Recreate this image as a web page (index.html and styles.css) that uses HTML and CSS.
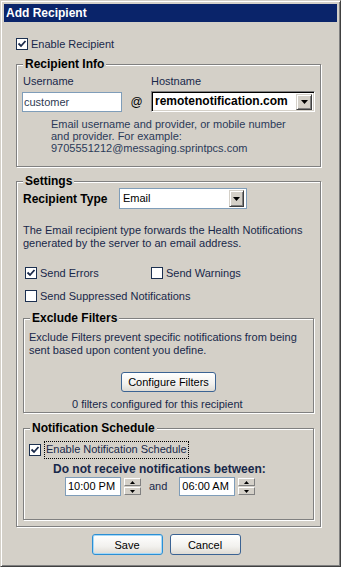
FILE: index.html
```html
<!DOCTYPE html>
<html lang="en">
<head>
  <meta charset="UTF-8">
  <title>Add Recipient</title>
  <link rel="stylesheet" href="styles.css">
</head>
<body>
  <div class="window">
    <!-- title bar -->
    <div class="titlebar">Add Recipient</div>

    <div class="content">
      <label class="check">
        <span class="box"><svg width="10" height="10" viewBox="0 0 10 10"><path d="M1.5 4.5 L4 7 L8.5 2" fill="none" stroke="#1b2a4a" stroke-width="1.8"/></svg></span>
        Enable Recipient
      </label>

      <!-- recipient info -->
      <fieldset class="group info">
        <legend>Recipient Info</legend>
        <div class="host-grid">
          <span class="field-label">Username</span>
          <span></span>
          <span class="field-label host-label">Hostname</span>
          <input class="text-input" type="text" value="customer">
          <span class="at">@</span>
          <div class="combo combo-inset">
            <span class="combo-value">remotenotification.com</span>
            <span class="drop-btn"><svg width="7" height="4" viewBox="0 0 7 4"><path d="M0 0 H7 L3.5 4 Z" fill="#000"/></svg></span>
          </div>
        </div>
        <p class="hint">Email username and provider, or mobile number<br>and provider. For example:<br>9705551212@messaging.sprintpcs.com</p>
      </fieldset>

      <!-- settings -->
      <fieldset class="group settings">
        <legend>Settings</legend>
        <div class="type-row">
          <span class="type-label">Recipient Type</span>
          <div class="combo combo-flat">
            <span class="combo-value">Email</span>
            <span class="drop-btn"><svg width="7" height="4" viewBox="0 0 7 4"><path d="M0 0 H7 L3.5 4 Z" fill="#000"/></svg></span>
          </div>
        </div>
        <p class="desc">The Email recipient type forwards the Health Notifications<br>generated by the server to an email address.</p>

        <div class="send-grid">
          <label class="check">
            <span class="box"><svg width="10" height="10" viewBox="0 0 10 10"><path d="M1.5 4.5 L4 7 L8.5 2" fill="none" stroke="#1b2a4a" stroke-width="1.8"/></svg></span>
            Send Errors
          </label>
          <label class="check"><span class="box"></span>Send Warnings</label>
          <label class="check span-2"><span class="box"></span>Send Suppressed Notifications</label>
        </div>

        <fieldset class="group sub filters">
          <legend>Exclude Filters</legend>
          <p class="sub-text">Exclude Filters prevent specific notifications from being<br>sent based upon content you define.</p>
          <div class="btn-row"><button class="xp-btn configure">Configure Filters</button></div>
          <p class="count">0 filters configured for this recipient</p>
        </fieldset>

        <fieldset class="group sub schedule">
          <legend>Notification Schedule</legend>
          <label class="check">
            <span class="box"><svg width="10" height="10" viewBox="0 0 10 10"><path d="M1.5 4.5 L4 7 L8.5 2" fill="none" stroke="#1b2a4a" stroke-width="1.8"/></svg></span>
            <span class="focus">Enable Notification Schedule</span>
          </label>
          <div class="between">Do not receive notifications between:</div>
          <div class="time-row">
            <div class="time">
              <span class="time-box">10:00 PM</span>
              <span class="spin">
                <span class="spin-btn"><svg width="5" height="3" viewBox="0 0 5 3"><path d="M0 3 H5 L2.5 0 Z" fill="#000"/></svg></span>
                <span class="spin-btn"><svg width="5" height="3" viewBox="0 0 5 3"><path d="M0 0 H5 L2.5 3 Z" fill="#000"/></svg></span>
              </span>
            </div>
            <span class="and">and</span>
            <div class="time">
              <span class="time-box">06:00 AM</span>
              <span class="spin">
                <span class="spin-btn"><svg width="5" height="3" viewBox="0 0 5 3"><path d="M0 3 H5 L2.5 0 Z" fill="#000"/></svg></span>
                <span class="spin-btn"><svg width="5" height="3" viewBox="0 0 5 3"><path d="M0 0 H5 L2.5 3 Z" fill="#000"/></svg></span>
              </span>
            </div>
          </div>
        </fieldset>
      </fieldset>

      <div class="actions">
        <button class="xp-btn default">Save</button>
        <button class="xp-btn">Cancel</button>
      </div>
    </div>
  </div>
</body>
</html>
```

FILE: styles.css
```css
:root {
  --face: #d4d0c8;
  --shadow: #808080;
  --dark: #404040;
  --hilite: #ffffff;
  --title: #0a246a;
  --ink: #18284a;
  --hint: #2b3a58;
  --field-border: #7f9db9;
}
html, body {
  margin: 0;
  padding: 0;
}
body {
  background: var(--face);
  font-family: "Liberation Sans", Arial, sans-serif;
  font-size: 11px;
  line-height: 13px;
  color: var(--ink);
}
p { margin: 0; }

/* ---------- window frame ---------- */
.window {
  width: 341px;
  height: 567px;
  box-sizing: border-box;
  padding: 3px 3px 0 3px;
  border: 1px solid;
  border-color: var(--face) var(--dark) var(--dark) var(--face);
  box-shadow: inset 1px 1px 0 var(--hilite), inset -1px -1px 0 var(--shadow);
  background: var(--face);
}
.titlebar {
  height: 18px;
  line-height: 18px;
  padding-left: 2px;
  background: var(--title);
  color: #fff;
  font-weight: bold;
  font-size: 12px;
}
.content {
  padding: 14px 0 0 12px;
}

/* ---------- checkboxes ---------- */
.check {
  display: flex;
  align-items: center;
  gap: 3px;
  height: 16px;
}
.box {
  width: 12px;
  height: 12px;
  box-sizing: border-box;
  border: 1px solid #1c3050;
  background: #fff;
  display: flex;
  align-items: center;
  justify-content: center;
  flex: none;
}
.focus {
  outline: 1px dotted #000;
  padding: 1px 1px 2px;
  margin-left: 1px;
}

/* ---------- group boxes ---------- */
.group {
  margin: 0;
  padding: 0 6px;
  min-width: 0;
  width: 305px;
  box-sizing: border-box;
  border: 1px solid var(--shadow);
  box-shadow: 1px 1px 0 var(--hilite), inset 1px 1px 0 var(--hilite);
}
.group legend {
  padding: 0 2px;
  font-size: 12px;
  line-height: 14px;
  font-weight: bold;
  color: #000;
  background: var(--face);
}
.info {
  margin-top: 5px;
  padding-bottom: 12px;
}
.settings {
  margin-top: 7px;
  padding-bottom: 6px;
}
.sub {
  width: 291px;
  padding: 0 5px;
}
.sub legend { margin-left: 1px; }

/* ---------- recipient info ---------- */
.host-grid {
  display: grid;
  grid-template-columns: 100px 29px 164px;
  row-gap: 4px;
  align-items: center;
  margin-left: -1px;
  padding-top: 4px;
}
.field-label { padding-left: 1px; }
.host-label { margin-left: -1px; }
.text-input {
  width: 100px;
  height: 20px;
  box-sizing: border-box;
  margin: 0;
  padding: 0 0 0 1px;
  border: 1px solid var(--field-border);
  background: #fff;
  font: 11px "Liberation Sans", Arial, sans-serif;
  color: #2e3a52;
  outline: none;
}
.at {
  text-align: center;
  font-size: 12px;
  color: #000;
}
.combo {
  display: flex;
  align-items: center;
  justify-content: space-between;
  box-sizing: border-box;
  background: #fff;
}
.combo-inset {
  width: 164px;
  height: 21px;
  margin-top: -1px;
  padding: 0 2px 0 3px;
  border: 1px solid;
  border-color: var(--shadow) var(--hilite) var(--hilite) var(--shadow);
  box-shadow: inset 1px 1px 0 #000, inset -1px -1px 0 var(--face);
}
.combo-inset .combo-value {
  font-size: 12px;
  font-weight: bold;
  color: #000;
}
.drop-btn {
  width: 16px;
  height: 16px;
  box-sizing: border-box;
  display: flex;
  align-items: center;
  justify-content: center;
  background: var(--face);
  border: 1px solid;
  border-color: var(--face) var(--dark) var(--dark) var(--face);
  box-shadow: inset 1px 1px 0 var(--hilite), inset -1px -1px 0 var(--shadow);
}
.hint {
  margin: 6px 0 0 28px;
  line-height: 12px;
  color: var(--hint);
}

/* ---------- settings ---------- */
.type-row {
  display: flex;
  align-items: center;
}
.type-label {
  width: 96px;
  font-size: 12px;
  line-height: 14px;
  font-weight: bold;
  color: #000;
}
.combo-flat {
  width: 128px;
  height: 21px;
  padding: 0 2px 0 3px;
  border: 1px solid var(--field-border);
  color: #000;
}
.combo-flat .drop-btn { height: 17px; width: 15px; }
.desc {
  margin-top: 15px;
}
.send-grid {
  display: grid;
  grid-template-columns: 126px auto;
  row-gap: 7px;
  margin: 15px 0 0 2px;
}
.span-2 { grid-column: 1 / span 2; }

.filters {
  margin-top: 7px;
  padding-bottom: 1px;
}
.sub-text { margin-top: 6px; }
.btn-row {
  display: flex;
  justify-content: center;
  margin-top: 15px;
}
.count {
  margin-top: 6px;
  padding-left: 43px;
}

.schedule {
  margin-top: 8px;
  padding-bottom: 23px;
}
.schedule .check { margin-top: 7px; }
.between {
  margin: 4px 0 0 24px;
  font-size: 12px;
  line-height: 14px;
  font-weight: bold;
}
.time-row {
  display: flex;
  align-items: center;
  gap: 8px;
  margin: 1px 0 0 36px;
}
.time {
  display: flex;
  align-items: center;
  gap: 3px;
}
.time-box {
  width: 56px;
  height: 19px;
  box-sizing: border-box;
  padding-left: 2px;
  border: 1px solid var(--field-border);
  background: #fff;
  color: #000;
  line-height: 17px;
}
.and { margin-right: 4px; }
.spin {
  display: flex;
  flex-direction: column;
  gap: 1px;
}
.spin-btn {
  width: 17px;
  height: 8px;
  box-sizing: border-box;
  display: flex;
  align-items: center;
  justify-content: center;
  background: var(--face);
  border: 1px solid;
  border-color: var(--hilite) var(--shadow) var(--shadow) var(--hilite);
}

/* ---------- buttons ---------- */
.xp-btn {
  height: 21px;
  box-sizing: border-box;
  padding: 0;
  border: 1px solid #3b6393;
  border-radius: 3px;
  background: linear-gradient(#ffffff, #f2f1ee 60%, #dedbd4);
  font: 11px "Liberation Sans", Arial, sans-serif;
  color: #000;
}
.configure { width: 95px; height: 20px; }
.actions {
  display: flex;
  justify-content: center;
  gap: 7px;
  width: 300px;
  margin-top: 7px;
}
.actions .xp-btn { width: 71px; }
.xp-btn.default {
  border-color: #2b8fd4;
  box-shadow: inset 0 0 0 1px #a6d8f7;
}
```
